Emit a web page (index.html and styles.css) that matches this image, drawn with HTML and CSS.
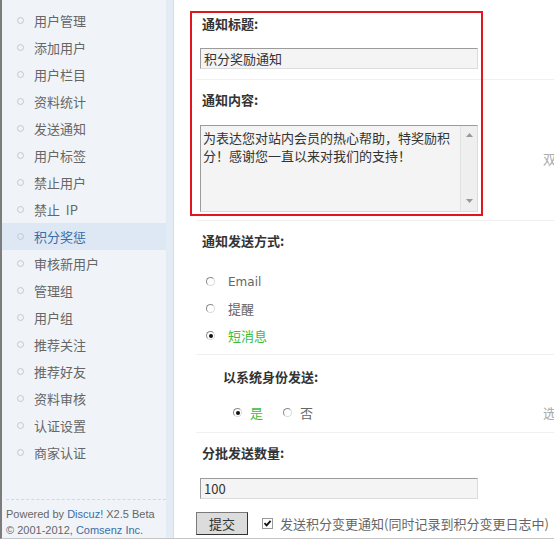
FILE: index.html
```html
<!DOCTYPE html>
<html>
<head>
<meta charset="utf-8">
<link rel="stylesheet" href="styles.css">
</head>
<body>
<div class="page">
  <div class="side">
    <ul class="menu">
      <li><span class="dot"></span>用户管理</li>
      <li><span class="dot"></span>添加用户</li>
      <li><span class="dot"></span>用户栏目</li>
      <li><span class="dot"></span>资料统计</li>
      <li><span class="dot"></span>发送通知</li>
      <li><span class="dot"></span>用户标签</li>
      <li><span class="dot"></span>禁止用户</li>
      <li><span class="dot"></span>禁止&nbsp; IP</li>
      <li class="on"><span class="dot"></span>积分奖惩</li>
      <li><span class="dot"></span>审核新用户</li>
      <li><span class="dot"></span>管理组</li>
      <li><span class="dot"></span>用户组</li>
      <li><span class="dot"></span>推荐关注</li>
      <li><span class="dot"></span>推荐好友</li>
      <li><span class="dot"></span>资料审核</li>
      <li><span class="dot"></span>认证设置</li>
      <li><span class="dot"></span>商家认证</li>
    </ul>
    <div class="copy">
      <p>Powered by <a href="#">Discuz!</a> X2.5 Beta</p>
      <p>&copy; 2001-2012, <a href="#">Comsenz Inc.</a></p>
    </div>
  </div>

  <div class="main">
    <div class="mark"></div>

    <div class="lbl">通知标题:</div>
    <div class="fld">
      <input class="txt" type="text" value="积分奖励通知">
    </div>

    <div class="lbl gap">通知内容:</div>
    <div class="fld area-row">
      <div class="area">
        <textarea>为表达您对站内会员的热心帮助，特奖励积
分！感谢您一直以来对我们的支持！</textarea>
        <div class="sb">
          <svg width="7" height="4" viewBox="0 0 7 4"><path d="M0 4L3.5 0L7 4Z" fill="#999"/></svg>
          <svg width="7" height="4" viewBox="0 0 7 4"><path d="M0 0L3.5 4L7 0Z" fill="#999"/></svg>
        </div>
      </div>
      <span class="tip tip-area">双</span>
    </div>

    <div class="lbl gap">通知发送方式:</div>
    <div class="opts">
      <div class="opt"><span class="rd"></span><span class="en">Email</span></div>
      <div class="opt"><span class="rd"></span>提醒</div>
      <div class="opt checked"><span class="rd on"></span>短消息</div>
    </div>

    <div class="lbl sub">以系统身份发送:</div>
    <div class="yesno">
      <div class="pair">
        <span class="rd on"></span><span class="checked">是</span>
        <span class="rd no"></span><span>否</span>
      </div>
      <span class="tip">选</span>
    </div>

    <div class="lbl gap">分批发送数量:</div>
    <div class="num">
      <input class="txt" type="text" value="100">
    </div>

    <div class="submit">
      <button class="btn" type="button">提交</button>
      <span class="cb">
        <svg width="9" height="9" viewBox="0 0 9 9"><path d="M1.5 4.2L3.6 6.4L7.6 1.8" fill="none" stroke="#111" stroke-width="1.8"/></svg>
      </span>
      <span class="cb-text">发送积分变更通知(同时记录到积分变更日志中)</span>
    </div>
  </div>
</div>
</body>
</html>
```

FILE: styles.css
```css
body {
    margin: 0;
    font: 13px "Noto Sans CJK SC", sans-serif;
    color: #555;
    background: #fff;
}
.page {
    display: flex;
    height: 538px;
    border-left: 2px solid #7c7c7c;
    border-bottom: 1px solid #c6c6c6;
    overflow: hidden;
}

/* left menu */
.side {
    width: 164px;
    flex: none;
    background: #f0f4f8;
    border-right: 7px solid #e3ebf4;
    display: flex;
    flex-direction: column;
}
.menu {
    list-style: none;
    margin: 0;
    padding: 7px 0 0;
}
.menu li {
    height: 27px;
    line-height: 27px;
    display: flex;
    align-items: center;
    color: #666;
}
.menu li.on {
    background: #dde8f4;
    color: #3a6da6;
}
.dot {
    width: 7px;
    height: 7px;
    box-sizing: border-box;
    border: 1px solid #c4c8cc;
    border-radius: 50%;
    margin: 0 10px 0 15px;
}
.copy {
    margin-top: auto;
    border-top: 1px dashed #d4d8dc;
    padding-top: 6px;
    margin-left: 4px;
    font: 11px "Liberation Sans", Arial, sans-serif;
    color: #666;
}
.copy p {
    margin: 0;
    line-height: 16px;
}
.copy a {
    color: #3a6da6;
    text-decoration: none;
}

/* form area */
.main {
    flex: 1;
    position: relative;
    padding: 11px 0 0 26px;
    border-left: 1px solid #d0deed;
    overflow: hidden;
}
.mark {
    position: absolute;
    left: 16px;
    top: 11px;
    width: 293px;
    height: 205px;
    box-sizing: border-box;
    border: 2px solid #e2161f;
    pointer-events: none;
}
.lbl {
    height: 26px;
    line-height: 26px;
    padding-left: 2px;
    font-weight: bold;
    color: #333;
}
.lbl.gap {
    margin-top: 7px;
}
.lbl.sub {
    margin-top: 9px;
    padding-left: 23px;
}
.fld {
    padding: 11px 0 10px;
    margin-left: -4px;
    padding-left: 4px;
    border-bottom: 1px solid #f0f0f0;
}
.area-row {
    display: flex;
    padding-top: 12px;
    padding-bottom: 8px;
    white-space: nowrap;
}
.txt {
    display: block;
    width: 278px;
    height: 21px;
    box-sizing: border-box;
    margin: 0;
    padding: 0 3px;
    border: 1px solid;
    border-color: #9c9c9c #dcdcdc #dcdcdc #9c9c9c;
    background: #f4f4f4;
    font: 13px "Noto Sans CJK SC", sans-serif;
    color: #333;
}
.area {
    display: flex;
    flex: none;
    width: 278px;
    height: 87px;
    box-sizing: border-box;
    border: 1px solid;
    border-color: #9c9c9c #dcdcdc #dcdcdc #9c9c9c;
    background: #f4f4f4;
}
.area textarea {
    flex: 1;
    margin: 0;
    padding: 3px 2px;
    border: none;
    background: transparent;
    resize: none;
    overflow: hidden;
    font: 13px/18px "Noto Sans CJK SC", sans-serif;
    color: #333;
}
.sb {
    width: 16px;
    border-left: 1px solid #e2e2e2;
    background: #efefef;
    display: flex;
    flex-direction: column;
    justify-content: space-between;
    align-items: center;
    padding: 7px 0 8px;
}
.tip {
    color: #aaa;
    white-space: nowrap;
}
.tip-area {
    margin: 24px 0 0 65px;
}

.opts {
    padding: 14px 0 5px;
    margin-left: -4px;
    padding-left: 4px;
    border-bottom: 1px solid #f0f0f0;
}
.opt {
    height: 27px;
    display: flex;
    align-items: center;
    padding-left: 6px;
    color: #666;
}
.opt.checked {
    color: #3dbb3d;
}
.en {
    font-family: "DejaVu Sans", Verdana, sans-serif;
    font-size: 12px;
}
.rd {
    width: 9px;
    height: 9px;
    box-sizing: border-box;
    border: 1px solid;
    border-color: #8a8a8a #dadada #dadada #8a8a8a;
    border-radius: 50%;
    margin-right: 13px;
    display: inline-flex;
    align-items: center;
    justify-content: center;
    background: #fff;
}
.rd.on::after {
    content: "";
    width: 4px;
    height: 4px;
    border-radius: 50%;
    background: #111;
}
.yesno {
    display: flex;
    align-items: center;
    height: 27px;
    padding: 9px 0 6px;
    margin-left: -4px;
    border-bottom: 1px solid #f0f0f0;
}
.pair {
    width: 347px;
    flex: none;
    display: flex;
    align-items: center;
    padding-left: 37px;
    box-sizing: border-box;
    color: #666;
}
.pair .rd {
    margin-right: 8px;
}
.pair .rd.no {
    margin-left: 20px;
}
.checked {
    color: #3dbb3d;
}
.num {
    padding-top: 12px;
}
.submit {
    display: flex;
    align-items: center;
    padding-top: 13px;
    margin-left: -4px;
}
.btn {
    width: 52px;
    height: 23px;
    margin: 0;
    padding: 0;
    border: 1px solid;
    border-color: #7a7a7a #333 #333 #7a7a7a;
    background: #dcdcdc;
    font: 13px "Noto Sans CJK SC", sans-serif;
    color: #333;
}
.cb {
    width: 11px;
    height: 11px;
    box-sizing: border-box;
    border: 1px solid #9a9a9a;
    background: #fff;
    margin-left: 14px;
    display: flex;
    align-items: center;
    justify-content: center;
}
.cb-text {
    margin-left: 7px;
    white-space: nowrap;
    color: #666;
}
```
